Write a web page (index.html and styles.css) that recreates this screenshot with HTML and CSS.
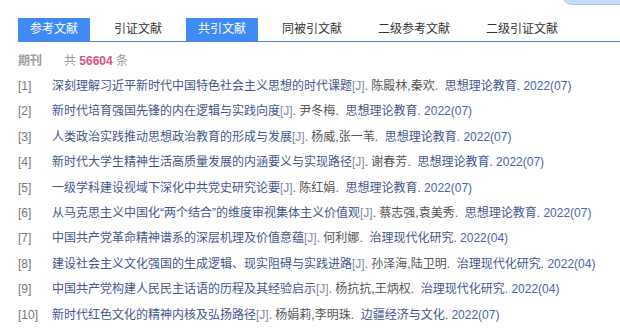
FILE: index.html
```html
<!DOCTYPE html>
<html>
<head>
<meta charset="utf-8">
<link rel="stylesheet" href="styles.css">
</head>
<body>
<div class="corner"></div>
<div class="page">
  <div class="tabs">
    <span class="tab on">参考文献</span>
    <span class="tab">引证文献</span>
    <span class="tab on">共引文献</span>
    <span class="tab">同被引文献</span>
    <span class="tab">二级参考文献</span>
    <span class="tab">二级引证文献</span>
  </div>
  <div class="stats"><span class="label">期刊</span><span class="total">共 <b>56604</b> 条</span></div>
  <ul class="list">
    <li><span class="idx">[1]</span><span class="t">深刻理解习近平新时代中国特色社会主义思想的时代课题</span><span class="j">[J]</span>. <span class="au">陈殿林,秦欢</span>. &nbsp;<span class="t">思想理论教育</span>. <span class="yr">2022(07)</span></li>
    <li><span class="idx">[2]</span><span class="t">新时代培育强国先锋的内在逻辑与实践向度</span><span class="j">[J]</span>. <span class="au">尹冬梅</span>. &nbsp;<span class="t">思想理论教育</span>. <span class="yr">2022(07)</span></li>
    <li><span class="idx">[3]</span><span class="t">人类政治实践推动思想政治教育的形成与发展</span><span class="j">[J]</span>. <span class="au">杨威,张一苇</span>. &nbsp;<span class="t">思想理论教育</span>. <span class="yr">2022(07)</span></li>
    <li><span class="idx">[4]</span><span class="t">新时代大学生精神生活高质量发展的内涵要义与实现路径</span><span class="j">[J]</span>. <span class="au">谢春芳</span>. &nbsp;<span class="t">思想理论教育</span>. <span class="yr">2022(07)</span></li>
    <li><span class="idx">[5]</span><span class="t">一级学科建设视域下深化中共党史研究论要</span><span class="j">[J]</span>. <span class="au">陈红娟</span>. &nbsp;<span class="t">思想理论教育</span>. <span class="yr">2022(07)</span></li>
    <li><span class="idx">[6]</span><span class="t">从马克思主义中国化“两个结合”的维度审视集体主义价值观</span><span class="j">[J]</span>. <span class="au">蔡志强,袁美秀</span>. &nbsp;<span class="t">思想理论教育</span>. <span class="yr">2022(07)</span></li>
    <li><span class="idx">[7]</span><span class="t">中国共产党革命精神谱系的深层机理及价值意蕴</span><span class="j">[J]</span>. <span class="au">何利娜</span>. &nbsp;<span class="t">治理现代化研究</span>. <span class="yr">2022(04)</span></li>
    <li><span class="idx">[8]</span><span class="t">建设社会主义文化强国的生成逻辑、现实阻碍与实践进路</span><span class="j">[J]</span>. <span class="au">孙泽海,陆卫明</span>. &nbsp;<span class="t">治理现代化研究</span>. <span class="yr">2022(04)</span></li>
    <li><span class="idx">[9]</span><span class="t">中国共产党构建人民民主话语的历程及其经验启示</span><span class="j">[J]</span>. <span class="au">杨抗抗,王炳权</span>. &nbsp;<span class="t">治理现代化研究</span>. <span class="yr">2022(04)</span></li>
    <li><span class="idx">[10]</span><span class="t">新时代红色文化的精神内核及弘扬路径</span><span class="j">[J]</span>. <span class="au">杨娟莉,李明珠</span>. &nbsp;<span class="t">边疆经济与文化</span>. <span class="yr">2022(07)</span></li>
  </ul>
</div>
</body>
</html>
```

FILE: styles.css
```css
html, body {
  margin: 0;
  padding: 0;
  background: #fff;
}
body {
  font-family: "Liberation Sans", "Noto Sans CJK SC", sans-serif;
  font-size: 12px;
  color: #555;
  position: relative;
  overflow: hidden;
  height: 332px;
}
.corner {
  position: absolute;
  top: -20px;
  right: -14px;
  width: 72px;
  height: 24px;
  background: #c7dbfc;
  border-bottom: 1px solid #a8c6f7;
  border-radius: 10px;
}
.page {
  padding: 18px 0 0 18px;
}
.tabs {
  display: flex;
  gap: 12px;
  border-bottom: 1px solid #4a86e8;
  height: 23px;
}
.tab {
  display: block;
  padding: 0 12px;
  height: 23px;
  line-height: 23px;
  color: #333;
  white-space: nowrap;
}
.tab.on {
  background: #3f8bf5;
  color: #fff;
}
.stats {
  margin-top: 6px;
  height: 26px;
  line-height: 26px;
  display: flex;
}
.label {
  font-weight: bold;
  color: #9a9a9a;
  width: 46px;
}
.total {
  color: #999;
}
.total b {
  color: #e0507f;
}
.list {
  list-style: none;
  margin: 0;
  padding: 0;
}
.list li {
  height: 25.4px;
  line-height: 25.4px;
  white-space: nowrap;
  display: flex;
  white-space: pre;
}
.idx {
  width: 34px;
  color: #777;
}
.t {
  color: #45568c;
}
.j {
  color: #7f8aa8;
}
.au {
  color: #555;
}
.yr {
  color: #4a64a8;
}
```
